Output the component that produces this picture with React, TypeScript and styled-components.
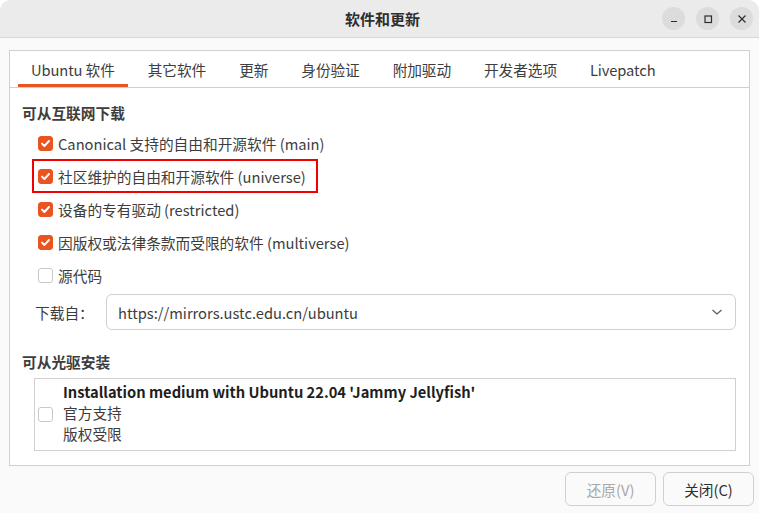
import React from "react";
import styled, { createGlobalStyle } from "styled-components";

const Global = createGlobalStyle`
  html, body { margin: 0; padding: 0; background: #ffffff; }
  body {
    font-family: "Noto Sans CJK SC", "Noto Sans", sans-serif;
    font-size: 14.7px;
    color: #3d3d3d;
  }
  * { box-sizing: border-box; }
`;

const Window = styled.div`
  width: 759px;
  height: 513px;
  background: #fafafa;
  border-radius: 11px 11px 0 0;
  overflow: hidden;
  display: flex;
  flex-direction: column;
`;

const TitleBar = styled.div`
  height: 38px;
  flex: none;
  background: #ebebeb;
  border-bottom: 1px solid #d8d8d8;
  display: grid;
  grid-template-columns: 1fr auto 1fr;
  align-items: center;
  padding: 0 6px 0 12px;
`;

const Title = styled.div`
  grid-column: 2;
  font-weight: 700;
  font-size: 15px;
  color: #2e2e2e;
`;

const Controls = styled.div`
  grid-column: 3;
  justify-self: end;
  display: flex;
  gap: 11px;
`;

const CtlButton = styled.div`
  width: 23px;
  height: 23px;
  border-radius: 50%;
  background: #dcdcdc;
  display: flex;
  align-items: center;
  justify-content: center;
`;

const Body = styled.div`
  flex: 1;
  display: flex;
  flex-direction: column;
  padding: 12px 9px 7px 9px;
`;

const Frame = styled.div`
  height: 416px;
  border: 1px solid #d0d0d0;
  background: #ffffff;
  display: flex;
  flex-direction: column;
`;

const TabBar = styled.div`
  display: flex;
  gap: 7px;
  padding-left: 8px;
  height: 37px;
  border-bottom: 1px solid #d0d0d0;
  flex: none;
`;

const Tab = styled.div<{ $active?: boolean }>`
  padding: 0 13px;
  display: flex;
  align-items: center;
  height: 100%;
  color: #3d3d3d;
  letter-spacing: -0.1px;
  box-shadow: ${(p) => (p.$active ? "inset 0 -3px 0 #e95420" : "none")};
  white-space: nowrap;
`;

const Content = styled.div`
  flex: 1;
  display: flex;
  flex-direction: column;
  padding: 15px 13px 0 12px;
`;

const Heading = styled.div`
  font-weight: 700;
  line-height: 20px;
  height: 20px;
`;

const Rows = styled.div`
  display: flex;
  flex-direction: column;
  align-items: flex-start;
  margin-top: 3px;
  padding-left: 10px;
`;

const Row = styled.div<{ $highlight?: boolean }>`
  display: inline-flex;
  align-items: center;
  gap: 5px;
  height: 34px;
  margin-bottom: -1px;
  padding: 0 ${(p) => (p.$highlight ? "12px" : "2px")} 0 6px;
  box-shadow: ${(p) => (p.$highlight ? "inset 0 0 0 2px #f20000" : "none")};
  white-space: nowrap;
`;

const Box = styled.span<{ $checked?: boolean }>`
  width: 15px;
  height: 15px;
  flex: none;
  border-radius: 3px;
  background: ${(p) => (p.$checked ? "#e95420" : "#ffffff")};
  border: 1px solid ${(p) => (p.$checked ? "#e95420" : "#c8c8c8")};
  display: inline-flex;
  align-items: center;
  justify-content: center;
`;

const Check: React.FC<{ checked?: boolean }> = ({ checked }) => (
  <Box $checked={checked}>
    {checked && (
      <svg width="11" height="11" viewBox="0 0 11 11">
        <path d="M2 5.6 L4.4 8 L9 3" fill="none" stroke="#fff" strokeWidth="1.9" strokeLinecap="round" strokeLinejoin="round" />
      </svg>
    )}
  </Box>
);

const SourceRow = styled.div`
  display: flex;
  align-items: center;
  margin-top: 3px;
  padding-left: 13px;
  height: 36px;
`;

const Label = styled.span`
  width: 71px;
  flex: none;
`;

const Combo = styled.div`
  flex: 1;
  height: 36px;
  border: 1px solid #d0d0d0;
  border-radius: 6px;
  background: #ffffff;
  display: flex;
  align-items: center;
  justify-content: space-between;
  padding: 0 12px 0 11px;
`;

const Heading2 = styled(Heading)`
  margin-top: 22px;
`;

const ListBox = styled.div`
  margin: 6px 0 0 12px;
  height: 73px;
  border: 1px solid #d0d0d0;
  background: #ffffff;
  display: flex;
  align-items: center;
  padding: 0 0 0 3px;
  gap: 10px;
`;

const ListText = styled.div`
  display: flex;
  flex-direction: column;
  margin-top: -4px;
`;

const ListLine = styled.div<{ $bold?: boolean }>`
  line-height: 21px;
  font-weight: ${(p) => (p.$bold ? 700 : 400)};
  color: ${(p) => (p.$bold ? "#1e1e1e" : "#3d3d3d")};
  white-space: nowrap;
`;

const Footer = styled.div`
  display: flex;
  justify-content: flex-end;
  gap: 7px;
  margin-top: 6px;
  margin-right: -4px;
`;

const Button = styled.div<{ $disabled?: boolean }>`
  width: 91px;
  height: 34px;
  border: 1px solid #d0d0d0;
  border-radius: 6px;
  background: #fafafa;
  display: flex;
  align-items: center;
  justify-content: center;
  color: ${(p) => (p.$disabled ? "#a8a8a8" : "#2e2e2e")};
`;

export default function App() {
  return (
    <>
      <Global />
      <Window>
        <TitleBar>
          <Title>软件和更新</Title>
          <Controls>
            <CtlButton>
              <svg width="10" height="10" viewBox="0 0 10 10">
                <path d="M2 7.5 H8" stroke="#2e2e2e" strokeWidth="1.2" />
              </svg>
            </CtlButton>
            <CtlButton>
              <svg width="10" height="10" viewBox="0 0 10 10">
                <rect x="2" y="2" width="6.5" height="6.5" fill="none" stroke="#2e2e2e" strokeWidth="1.2" />
              </svg>
            </CtlButton>
            <CtlButton>
              <svg width="10" height="10" viewBox="0 0 10 10">
                <path d="M1.5 1.5 L8.5 8.5 M8.5 1.5 L1.5 8.5" stroke="#2e2e2e" strokeWidth="1.2" />
              </svg>
            </CtlButton>
          </Controls>
        </TitleBar>
        <Body>
          <Frame>
            <TabBar>
              <Tab $active>Ubuntu 软件</Tab>
              <Tab>其它软件</Tab>
              <Tab>更新</Tab>
              <Tab>身份验证</Tab>
              <Tab>附加驱动</Tab>
              <Tab>开发者选项</Tab>
              <Tab>Livepatch</Tab>
            </TabBar>
            <Content>
              <Heading>可从互联网下载</Heading>
              <Rows>
                <Row><Check checked />Canonical 支持的自由和开源软件 (main)</Row>
                <Row $highlight><Check checked />社区维护的自由和开源软件 (universe)</Row>
                <Row><Check checked />设备的专有驱动 (restricted)</Row>
                <Row><Check checked />因版权或法律条款而受限的软件 (multiverse)</Row>
                <Row><Check />源代码</Row>
              </Rows>
              <SourceRow>
                <Label>下载自：</Label>
                <Combo>
                  <span>https://mirrors.ustc.edu.cn/ubuntu</span>
                  <svg width="12" height="8" viewBox="0 0 12 8">
                    <path d="M1.5 2 L6 6 L10.5 2" fill="none" stroke="#555" strokeWidth="1.1" />
                  </svg>
                </Combo>
              </SourceRow>
              <Heading2>可从光驱安装</Heading2>
              <ListBox>
                <Check />
                <ListText>
                  <ListLine $bold>Installation medium with Ubuntu 22.04 'Jammy Jellyfish'</ListLine>
                  <ListLine>官方支持</ListLine>
                  <ListLine>版权受限</ListLine>
                </ListText>
              </ListBox>
            </Content>
          </Frame>
          <Footer>
            <Button $disabled>还原(V)</Button>
            <Button>关闭(C)</Button>
          </Footer>
        </Body>
      </Window>
    </>
  );
}
